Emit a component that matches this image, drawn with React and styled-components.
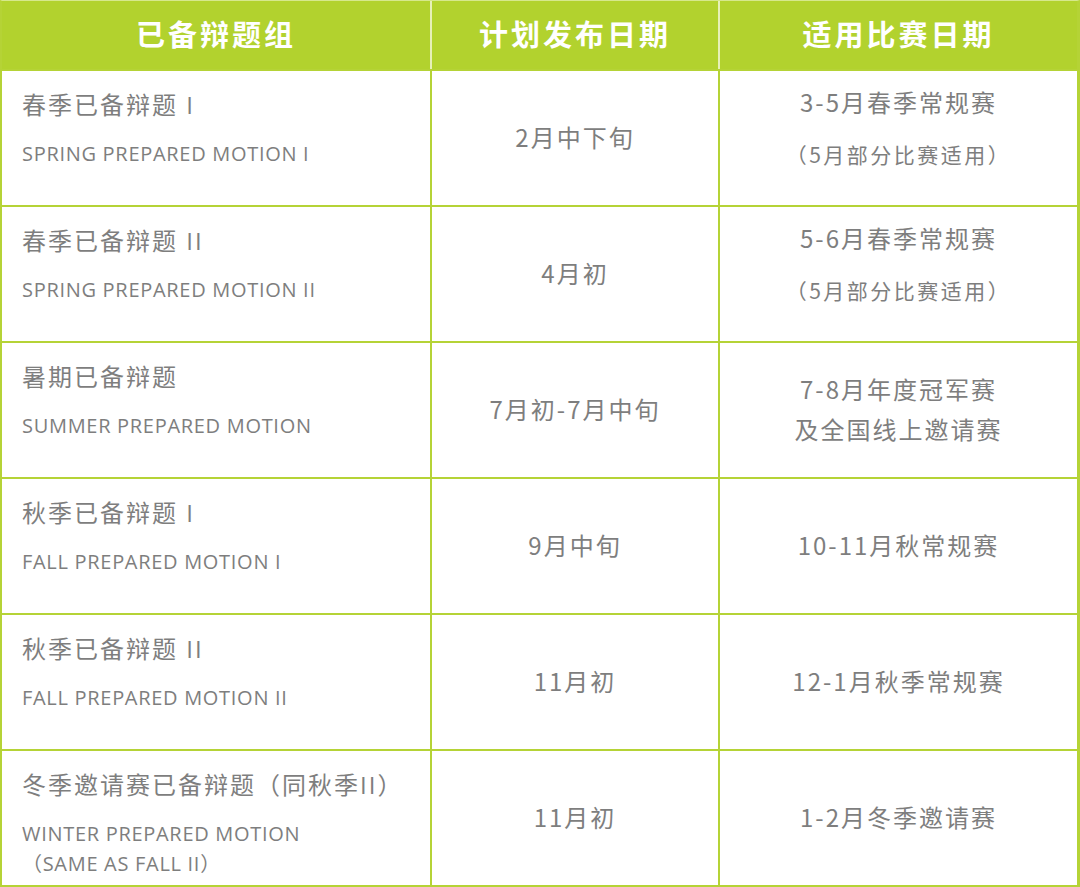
import styled, { createGlobalStyle } from "styled-components";

const GlobalStyle = createGlobalStyle`
  html, body {
    margin: 0;
    padding: 0;
    background: #ffffff;
  }
  body {
    font-family: "Open Sans", "Noto Sans CJK SC", sans-serif;
  }
`;

const LINE = "#b5d336";

const ROWS = [
  {
    zh: "春季已备辩题 I",
    en: ["SPRING PREPARED MOTION I"],
    release: "2月中下旬",
    apply: "3-5月春季常规赛",
    note: "（5月部分比赛适用）",
  },
  {
    zh: "春季已备辩题 II",
    en: ["SPRING PREPARED MOTION II"],
    release: "4月初",
    apply: "5-6月春季常规赛",
    note: "（5月部分比赛适用）",
  },
  {
    zh: "暑期已备辩题",
    en: ["SUMMER PREPARED MOTION"],
    release: "7月初-7月中旬",
    apply: "7-8月年度冠军赛",
    apply2: "及全国线上邀请赛",
  },
  {
    zh: "秋季已备辩题 I",
    en: ["FALL PREPARED MOTION I"],
    release: "9月中旬",
    apply: "10-11月秋常规赛",
  },
  {
    zh: "秋季已备辩题 II",
    en: ["FALL PREPARED MOTION II"],
    release: "11月初",
    apply: "12-1月秋季常规赛",
  },
  {
    zh: "冬季邀请赛已备辩题（同秋季II）",
    en: ["WINTER PREPARED MOTION", "（SAME AS FALL II）"],
    release: "11月初",
    apply: "1-2月冬季邀请赛",
  },
];

const Table = styled.div`
  width: 1080px;
  display: grid;
  grid-template-columns: 428px 288px 1fr;
  grid-template-rows: 68px repeat(6, 136px);
  box-sizing: border-box;
  border-left: 2px solid ${LINE};
  border-right: 3px solid ${LINE};
  border-bottom: 3px solid ${LINE};
  border-top: 1px solid #d6e88c;
`;

const HeadCell = styled.div`
  background: #b2d22e;
  color: #ffffff;
  font-family: "Noto Sans CJK SC", sans-serif;
  font-weight: 700;
  font-size: 29px;
  letter-spacing: 3px;
  display: flex;
  align-items: center;
  justify-content: center;
  padding-bottom: 4px;
  box-sizing: border-box;
  border-left: ${(p) => (p.$first ? "none" : "2px solid #e6f0b8")};
`;

const Cell = styled.div`
  box-sizing: border-box;
  border-top: 2px solid ${LINE};
  border-left: ${(p) => (p.$first ? "none" : `2px solid ${LINE}`)};
  color: #7e7e7e;
  display: flex;
  flex-direction: column;
`;

const NameCell = styled(Cell)`
  padding: 18px 20px 0 20px;
`;

const CenterCell = styled(Cell)`
  align-items: center;
  justify-content: center;
  text-align: center;
  padding-bottom: ${(p) => (p.$shift ? "20px" : "2px")};
`;

const ZhTitle = styled.div`
  font-family: "Open Sans", "Noto Sans CJK SC", sans-serif;
  font-size: 24px;
  line-height: 32px;
  letter-spacing: 2px;
`;

const EnBlock = styled.div`
  margin-top: 18px;
  font-family: "Open Sans", "Noto Sans CJK SC", sans-serif;
  font-size: 20px;
  line-height: 30px;
  letter-spacing: 0.7px;
  white-space: pre;
`;

const Value = styled.div`
  font-family: "Noto Sans CJK SC", sans-serif;
  font-size: 24px;
  letter-spacing: 2px;
  line-height: ${(p) => (p.$tight ? "40px" : "32px")};
`;

const Note = styled.div`
  font-family: "Noto Sans CJK SC", sans-serif;
  font-size: 21px;
  letter-spacing: 2.5px;
  line-height: 32px;
  margin-top: 20px;
`;

export default function App() {
  return (
    <>
      <GlobalStyle />
      <Table>
        <HeadCell $first>已备辩题组</HeadCell>
        <HeadCell>计划发布日期</HeadCell>
        <HeadCell>适用比赛日期</HeadCell>
        {ROWS.map((row) => (
          <RowCells key={row.zh} row={row} />
        ))}
      </Table>
    </>
  );
}

function RowCells({ row }) {
  return (
    <>
      <NameCell $first>
        <ZhTitle>{row.zh}</ZhTitle>
        <EnBlock>
          {row.en.map((line) => (
            <div key={line}>{line}</div>
          ))}
        </EnBlock>
      </NameCell>
      <CenterCell>
        <Value>{row.release}</Value>
      </CenterCell>
      <CenterCell $shift={!!row.note}>
        <Value $tight={!!row.apply2}>{row.apply}</Value>
        {row.apply2 && <Value $tight>{row.apply2}</Value>}
        {row.note && <Note>{row.note}</Note>}
      </CenterCell>
    </>
  );
}
